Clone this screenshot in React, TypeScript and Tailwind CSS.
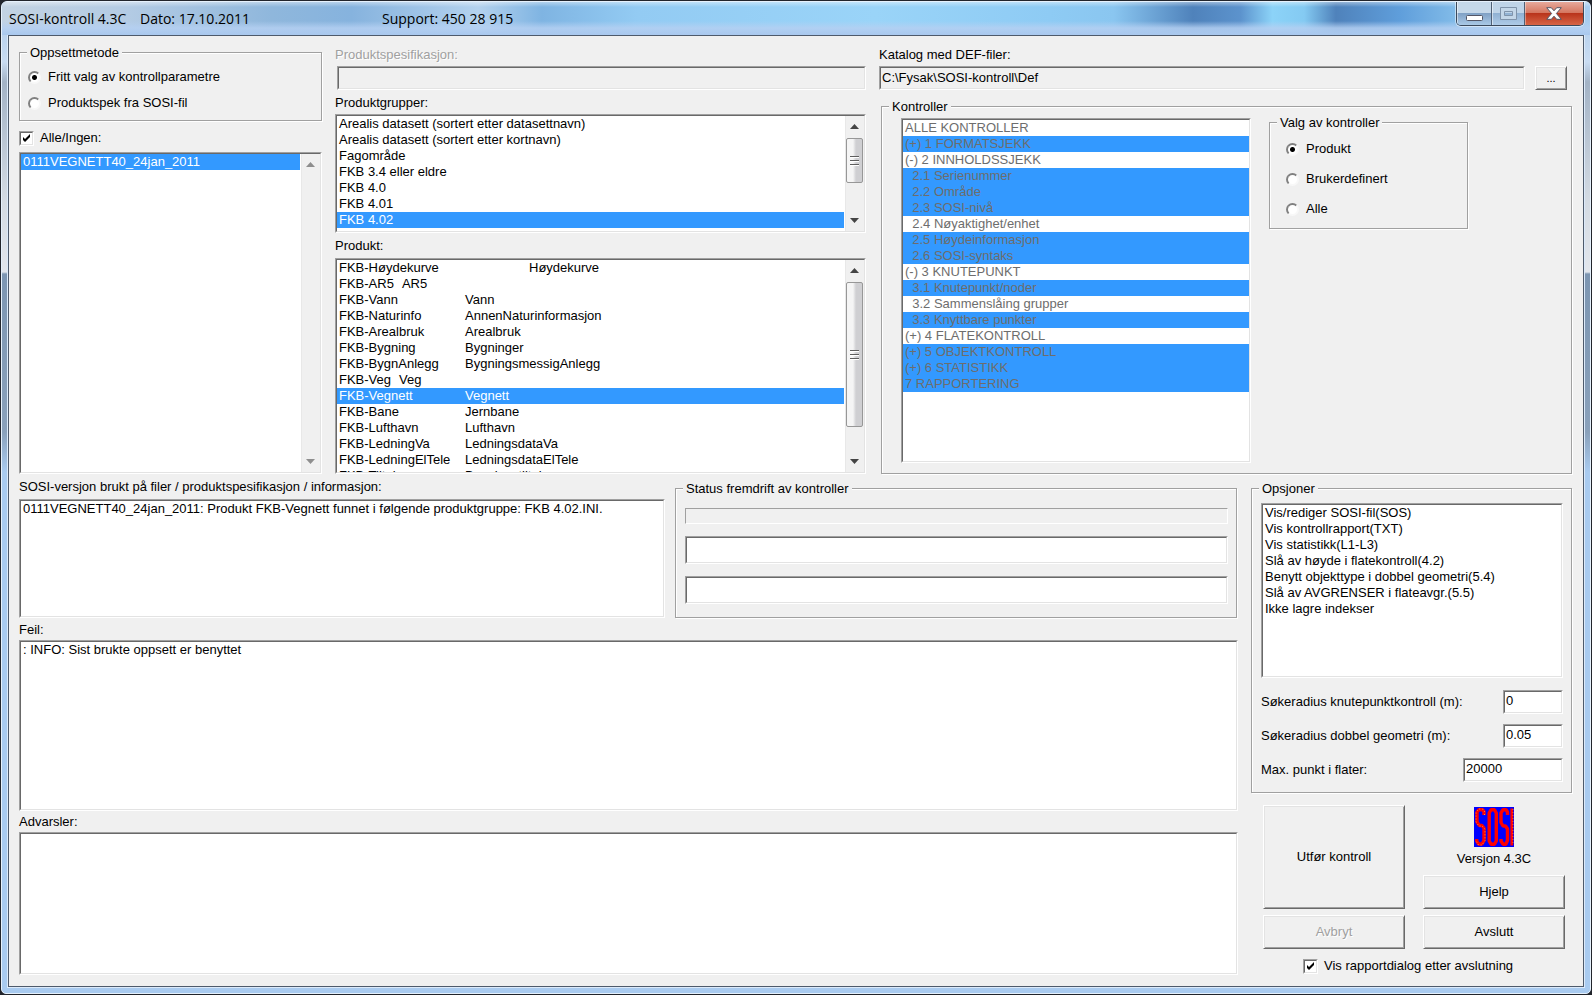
import type { ReactNode } from "react";

const sunken =
  "border border-t-[#a0a0a0] border-l-[#a0a0a0] border-r-white border-b-white";
const sunkenInner =
  "border border-t-[#696969] border-l-[#696969] border-r-[#e3e3e3] border-b-[#e3e3e3]";

function Sunken({ className = "", children }: { className?: string; children?: ReactNode }) {
  return (
    <div className={`${sunken} flex min-w-0 ${className}`}>
      <div className={`${sunkenInner} flex min-w-0 flex-1 overflow-hidden bg-white`}>{children}</div>
    </div>
  );
}

type Row = { text: string; second?: string; at?: "near" | "tab" | "far"; selected?: boolean };

const secondColumn = {
  near: "ml-2",
  tab: "absolute left-[128px]",
  far: "absolute left-[192px]",
};

function ListBox({
  label,
  rows,
  muted = false,
  className = "",
  scroll,
}: {
  label: string;
  rows: Row[];
  muted?: boolean;
  className?: string;
  scroll?: ReactNode;
}) {
  return (
    <Sunken className={className}>
      <ul role="listbox" aria-label={label} className="min-w-0 flex-1 overflow-hidden">
        {rows.map((row) => (
          <li
            key={row.text}
            role="option"
            aria-selected={!!row.selected}
            className={`relative h-4 pl-[2px] leading-4 whitespace-pre ${
              row.selected ? "bg-[#3399ff]" : ""
            } ${muted ? "text-[#6d6d6d]" : row.selected ? "text-white" : "text-black"}`}
          >
            {row.text}
            {row.second && <span className={secondColumn[row.at ?? "tab"]}>{row.second}</span>}
          </li>
        ))}
      </ul>
      {scroll}
    </Sunken>
  );
}

function Arrow({ up = false, dim = false }: { up?: boolean; dim?: boolean }) {
  return (
    <svg viewBox="0 0 9 5" className="h-[5px] w-[9px]" aria-hidden="true">
      <path d={up ? "M4.500 0L9 5H0Z" : "M4.500 5L9 0H0Z"} fill={dim ? "#8e8e8e" : "#444"} />
    </svg>
  );
}

function ScrollBar({ thumb, dim = false }: { thumb?: string; dim?: boolean }) {
  return (
    <div className="ml-[1px] flex w-[19px] shrink-0 flex-col border-l border-[#e8e8e8] bg-[#f0f0f0] pr-px">
      <button type="button" aria-label="Rull opp" disabled={dim} className="flex h-[22px] shrink-0 items-center justify-center pb-[2px]">
        <Arrow up dim={dim} />
      </button>
      <div className="min-h-0 flex-1">
        {thumb && (
          <div
            className={`flex items-center justify-center rounded-[2px] border border-[#979797] bg-linear-to-r from-[#f5f5f5] from-40% to-[#cfcfd2] to-60% ${thumb}`}
          >
            <svg viewBox="0 0 9 11" className="h-[11px] w-[9px]" aria-hidden="true">
              <path d="M0 1.5H9M0 5.5H9M0 9.5H9" stroke="#5e5e5e" />
              <path d="M0 2.5H9M0 6.5H9M0 10.5H9" stroke="#fff" />
            </svg>
          </div>
        )}
      </div>
      <button type="button" aria-label="Rull ned" disabled={dim} className="flex h-[22px] shrink-0 items-center justify-center">
        <Arrow dim={dim} />
      </button>
    </div>
  );
}

function Group({ title, className = "", children }: { title: string; className?: string; children: ReactNode }) {
  return (
    <fieldset className={`relative min-w-0 border border-[#a0a0a0] shadow-[1px_1px_0_#fff,inset_1px_1px_0_#fff] ${className}`}>
      <legend className="absolute -top-2 left-[7px] bg-[#f0f0f0] px-[3px] leading-4">{title}</legend>
      {children}
    </fieldset>
  );
}

function Radio({ name, label, checked = false }: { name: string; label: string; checked?: boolean }) {
  return (
    <label className="flex items-center gap-[7px] leading-4">
      <input
        type="radio"
        name={name}
        defaultChecked={checked}
        className="size-[13px] shrink-0 appearance-none rounded-full border-2 border-t-[#808080] border-r-[#f8f8f8] border-b-[#f8f8f8] border-l-[#808080] bg-white checked:bg-[radial-gradient(circle,#000_2px,#fff_3px)]"
      />
      {label}
    </label>
  );
}

function Check({ label }: { label: string }) {
  return (
    <label className="flex items-center gap-[6px] leading-4">
      <span className={`${sunken} grid size-[15px] shrink-0`}>
        <input
          type="checkbox"
          defaultChecked
          className={`${sunkenInner} peer col-start-1 row-start-1 size-[13px] appearance-none bg-white`}
        />
        <svg viewBox="0 0 13 13" className="pointer-events-none col-start-1 row-start-1 hidden size-[13px] peer-checked:block" aria-hidden="true">
          <path d="M3 5v3l2 2 5-5V2L5 7z" fill="#000" />
        </svg>
      </span>
      {label}
    </label>
  );
}

function PushButton({ children, className = "", disabled = false }: { children: ReactNode; className?: string; disabled?: boolean }) {
  return (
    <button
      type="button"
      disabled={disabled}
      className={`border border-t-white border-r-[#696969] border-b-[#696969] border-l-white bg-[#f0f0f0] leading-4 shadow-[inset_1px_1px_0_#e3e3e3,inset_-1px_-1px_0_#a0a0a0] disabled:text-[#a0a0a0] disabled:[text-shadow:1px_1px_0_#fff] ${className}`}
    >
      {children}
    </button>
  );
}

function NumberField({ id, label, value, width }: { id: string; label: string; value: string; width: string }) {
  return (
    <div className="flex h-6 items-center justify-between">
      <label htmlFor={id} className="leading-4">
        {label}
      </label>
      <Sunken className={`h-6 ${width}`}>
        <input id={id} defaultValue={value} className="w-full min-w-0 px-[1px] pb-[2px] leading-4" />
      </Sunken>
    </div>
  );
}

const groups: Row[] = [
  { text: "Arealis datasett (sortert etter datasettnavn)" },
  { text: "Arealis datasett (sortert etter kortnavn)" },
  { text: "Fagområde" },
  { text: "FKB 3.4 eller eldre" },
  { text: "FKB 4.0" },
  { text: "FKB 4.01" },
  { text: "FKB 4.02", selected: true },
  { text: "Kyst og Sjø fellesdel" },
];

const products: Row[] = [
  { text: "FKB-Høydekurve", second: "Høydekurve", at: "far" },
  { text: "FKB-AR5", second: "AR5", at: "near" },
  { text: "FKB-Vann", second: "Vann" },
  { text: "FKB-Naturinfo", second: "AnnenNaturinformasjon" },
  { text: "FKB-Arealbruk", second: "Arealbruk" },
  { text: "FKB-Bygning", second: "Bygninger" },
  { text: "FKB-BygnAnlegg", second: "BygningsmessigAnlegg" },
  { text: "FKB-Veg", second: "Veg", at: "near" },
  { text: "FKB-Vegnett", second: "Vegnett", selected: true },
  { text: "FKB-Bane", second: "Jernbane" },
  { text: "FKB-Lufthavn", second: "Lufthavn" },
  { text: "FKB-LedningVa", second: "LedningsdataVa" },
  { text: "FKB-LedningElTele", second: "LedningsdataElTele" },
  { text: "FKB-Tiltak", second: "Bygningstiltak" },
];

const controls: Row[] = [
  { text: "ALLE KONTROLLER" },
  { text: "(+) 1 FORMATSJEKK", selected: true },
  { text: "(-) 2 INNHOLDSSJEKK" },
  { text: "  2.1 Serienummer", selected: true },
  { text: "  2.2 Område", selected: true },
  { text: "  2.3 SOSI-nivå", selected: true },
  { text: "  2.4 Nøyaktighet/enhet" },
  { text: "  2.5 Høydeinformasjon", selected: true },
  { text: "  2.6 SOSI-syntaks", selected: true },
  { text: "(-) 3 KNUTEPUNKT" },
  { text: "  3.1 Knutepunkt/noder", selected: true },
  { text: "  3.2 Sammenslåing grupper" },
  { text: "  3.3 Knyttbare punkter", selected: true },
  { text: "(+) 4 FLATEKONTROLL" },
  { text: "(+) 5 OBJEKTKONTROLL", selected: true },
  { text: "(+) 6 STATISTIKK", selected: true },
  { text: "7 RAPPORTERING", selected: true },
];

const options: Row[] = [
  { text: "Vis/rediger SOSI-fil(SOS)" },
  { text: "Vis kontrollrapport(TXT)" },
  { text: "Vis statistikk(L1-L3)" },
  { text: "Slå av høyde i flatekontroll(4.2)" },
  { text: "Benytt objekttype i dobbel geometri(5.4)" },
  { text: "Slå av AVGRENSER i flateavgr.(5.5)" },
  { text: "Ikke lagre indekser" },
];

function Logo() {
  return (
    <svg viewBox="0 0 40 40" className="size-10" role="img" aria-label="SOSI">
      <rect width="40" height="40" fill="#0000ff" />
      <g fill="none" stroke="#ff0000" strokeWidth="3.400" strokeLinejoin="bevel">
        <path d="M10 8V4.500L8.500 2.700H5L3 5v10l2.500 3.500h2.500L10 21v12.500L8 37H4.500L2.700 34v-2" />
        <path d="M17 2.700h3.500L22.300 6v28l-1.800 3.200H17L15.200 34V6z" />
        <path d="M33.500 8V5L32 2.700h-3L27 6v9.500l2 3.500h2.500l2 3v11.500L31.800 37.200h-2.800L27 34v-2" />
        <path d="M37.800 1.500v37" strokeWidth="2.800" />
      </g>
      <g fill="none" stroke="#ffc040" strokeWidth="0.800" strokeDasharray="1 2">
        <path d="M10.500 8V4.500L8.500 2H5L2 5v10l3 4h3l3 3v11.500L8 38H4.500L2 34" />
      </g>
      <path d="M39 2v36" stroke="#ffc040" strokeWidth="0.600" strokeDasharray="1 2" />
    </svg>
  );
}

function TitleBar() {
  return (
    <header className="relative flex h-[33px] shrink-0 items-start overflow-hidden bg-[linear-gradient(90deg,#c3d3e3_0%,#b3cbe4_8%,#8fb7dc_17%,#86b3de_22%,#b4d2ee_30%,#7fb4e2_34%,#93cbf3_40%,#9ad4f8_55%,#8ecbf4_66%,#8ac6f0_70%,#4f82bb_75%,#5c93cd_78%,#8cd3f8_80%,#84caf2_82%,#4f82bb_84%,#5f9edb_88%,#86bfea_92%,#a8cdf0_100%)] font-['Open_Sans','Noto_Sans',sans-serif] text-sm text-black">
      <div className="pointer-events-none absolute inset-0 bg-[linear-gradient(180deg,#ffffff66_0,#ffffff00_5px,#ffffff00_19px,#b5d0f2d9_26px,#a9c8ee_33px)]" />
      <div className="relative flex flex-1 items-center pt-[7px] pl-[7px] leading-5">
        <h1 className="w-[373px] shrink-0">
          SOSI-kontroll 4.3C <span className="ml-[10px]">Dato: 17.10.2011</span>
        </h1>
        <span>Support: 450 28 915</span>
      </div>
      <div className="relative mr-[6px] flex h-6 w-32 overflow-hidden rounded-b-[5px] border border-t-0 border-[#3c4a5c] shadow-[0_0_0_1px_#ffffff80]">
        <button type="button" aria-label="Minimer" className="flex w-[35px] items-end justify-center border-r border-[#4f6076] bg-[linear-gradient(180deg,#c5d8e9_0_11px,#7fa0c4_11px,#a9c9e6)] pb-1 shadow-[inset_1px_0_0_#ffffff80]">
          <svg viewBox="0 0 17 6" className="h-[6px] w-[17px]" aria-hidden="true">
            <rect x="0.500" y="0.500" width="16" height="5" rx="1" fill="#fff" stroke="#535666" />
          </svg>
        </button>
        <button type="button" aria-label="Maksimer" disabled className="flex w-[33px] items-center justify-center border-r border-[#4f6076] bg-[linear-gradient(180deg,#bfd4e8_0_11px,#8fb0d2_11px,#aecbe8)] shadow-[inset_1px_0_0_#ffffff80]">
          <svg viewBox="0 0 17 13" className="h-[13px] w-[17px]" aria-hidden="true">
            <path d="M0.500 0.500h16v12H0.500zM4.500 4.500v4h8v-4z" fill="#c3d6e8" stroke="#7f93aa" fillRule="evenodd" />
          </svg>
        </button>
        <button type="button" aria-label="Lukk" className="flex flex-1 items-center justify-center bg-[linear-gradient(180deg,#e6a99b_0,#d4755f_11px,#b8321a_11px,#d9694a_24px)] shadow-[inset_1px_0_0_#ffffff60]">
          <svg viewBox="0 0 16 13" className="h-[13px] w-4" aria-hidden="true">
            <path d="M0.700 0.700h4.600L8 3.800l2.700-3.100h4.600L10.400 6.500l4.900 5.800h-4.600L8 9.200l-2.700 3.100H0.700l4.900-5.800z" fill="#fff" stroke="#535666" />
          </svg>
        </button>
      </div>
    </header>
  );
}

export default function App() {
  return (
    <div className="flex min-h-screen flex-col bg-[#22252c] p-px font-['Liberation_Sans',Arial,sans-serif] text-[13px] text-black">
      <div className="flex flex-1 flex-col overflow-hidden rounded-t-[6px] rounded-b-[5px] border border-[#e6f1fc] bg-[#a9c8ea] bg-[linear-gradient(180deg,#a9c8ea_0,#c9dcf2_60px,#a3b3c6_80px,#d4dbe3_200px,#e2e6ec_270px,#7d96b2_272px,#8aa1bb_430px,#a9cbf0_470px,#a9cbf0_100%)]">
        <TitleBar />
        <main className="mx-[6px] mb-[6px] flex flex-1 flex-col border border-[#4e5a6b] bg-[#f0f0f0] px-[10px] pt-[9px] pb-[11px] outline outline-[#dceafa]">
          <section className="grid h-[429px] grid-cols-[303fr_531fr_694fr] grid-rows-[minmax(0,1fr)] gap-[13px]">
            <div className="flex min-w-0 flex-col">
              <Group title="Oppsettmetode" className="mt-[7px] flex h-[69px] shrink-0 flex-col gap-[10px] pt-4 pl-2">
                <Radio name="setup" label="Fritt valg av kontrollparametre" checked />
                <Radio name="setup" label="Produktspek fra SOSI-fil" />
              </Group>
              <div className="mt-[9px] mb-[6px]">
                <Check label="Alle/Ingen:" />
              </div>
              <ListBox
                label="Alle/Ingen"
                className="min-h-0 flex-1"
                rows={[{ text: "0111VEGNETT40_24jan_2011", selected: true }]}
                scroll={<ScrollBar dim />}
              />
            </div>

            <div className="flex min-w-0 flex-col">
              <label htmlFor="spec" className="mt-[2px] leading-4 text-[#a0a0a0] [text-shadow:1px_1px_0_#fff]">
                Produktspesifikasjon:
              </label>
              <div className={`${sunken} mt-[3px] ml-[2px] flex h-6 shrink-0`}>
                <input id="spec" disabled className={`${sunkenInner} w-full bg-[#f0f0f0]`} />
              </div>
              <span className="mt-[5px] mb-[3px] leading-4">Produktgrupper:</span>
              <ListBox
                label="Produktgrupper"
                className="h-[119px] shrink-0"
                rows={groups}
                scroll={<ScrollBar thumb="h-[45px]" />}
              />
              <span className="mt-[5px] mb-1 leading-4">Produkt:</span>
              <ListBox label="Produkt" className="min-h-0 flex-1" rows={products} scroll={<ScrollBar thumb="h-[145px]" />} />
            </div>

            <div className="flex min-w-0 flex-col pr-px">
              <label htmlFor="catalog" className="mt-[2px] leading-4">
                Katalog med DEF-filer:
              </label>
              <div className="mt-[3px] mr-[5px] flex gap-[10px]">
                <div className={`${sunken} flex h-6 flex-1`}>
                  <input
                    id="catalog"
                    readOnly
                    defaultValue="C:\Fysak\SOSI-kontroll\Def"
                    className={`${sunkenInner} w-full bg-[#f0f0f0] px-[1px] pb-[1px] leading-4`}
                  />
                </div>
                <PushButton className="h-6 w-8 text-[11px]">...</PushButton>
              </div>
              <Group title="Kontroller" className="mt-4 ml-[2px] flex min-h-0 flex-1 items-start gap-[18px] pt-[11px] pb-[10px] pl-[19px]">
                <ListBox label="Kontroller" muted className="w-[350px] self-stretch" rows={controls} />
                <Group title="Valg av kontroller" className="mt-1 flex h-[107px] w-[199px] flex-col gap-[14px] pt-[18px] pl-4">
                  <Radio name="choice" label="Produkt" checked />
                  <Radio name="choice" label="Brukerdefinert" />
                  <Radio name="choice" label="Alle" />
                </Group>
              </Group>
            </div>
          </section>

          <section className="grid flex-1 grid-cols-[1219fr_322fr] gap-[13px]">
            <div className="flex min-w-0 flex-col">
              <div className="grid h-[144px] grid-cols-[646fr_562fr] gap-[10px] pr-px">
                <div className="flex min-w-0 flex-col">
                  <span className="mt-[5px] mb-1 leading-4">SOSI-versjon brukt på filer / produktspesifikasjon / informasjon:</span>
                  <ListBox
                    label="Informasjon"
                    className="flex-1"
                    rows={[
                      {
                        text: "0111VEGNETT40_24jan_2011: Produkt FKB-Vegnett funnet i følgende produktgruppe: FKB 4.02.INI.",
                      },
                    ]}
                  />
                </div>
                <Group title="Status fremdrift av kontroller" className="mt-[14px] flex flex-col gap-3 pt-[19px] pr-2 pl-[9px]">
                  <div role="progressbar" aria-label="Fremdrift" aria-valuenow={0} className="h-4 border border-t-[#a0a0a0] border-r-white border-b-white border-l-[#a0a0a0]" />
                  <Sunken className="h-7">
                    <input aria-label="Status 1" readOnly className="w-full" />
                  </Sunken>
                  <Sunken className="h-7">
                    <input aria-label="Status 2" readOnly className="w-full" />
                  </Sunken>
                </Group>
              </div>
              <span className="mt-1 mb-[2px] leading-4">Feil:</span>
              <ListBox label="Feil" className="h-[171px] shrink-0" rows={[{ text: ": INFO: Sist brukte oppsett er benyttet" }]} />
              <span className="mt-[3px] mb-[2px] leading-4">Advarsler:</span>
              <ListBox label="Advarsler" className="min-h-[139px] flex-1" rows={[]} />
            </div>

            <div className="flex min-w-0 flex-col">
              <Group title="Opsjoner" className="mt-[14px] mr-px flex h-[305px] flex-col gap-[10px] pt-[14px] pr-2 pl-[9px]">
                <ListBox label="Opsjoner" className="mb-[2px] h-[175px] shrink-0" rows={options} />
                <NumberField id="node-radius" label="Søkeradius knutepunktkontroll (m):" value="0" width="w-[60px]" />
                <NumberField id="double-radius" label="Søkeradius dobbel geometri (m):" value="0.05" width="w-[60px]" />
                <NumberField id="max-points" label="Max. punkt i flater:" value="20000" width="w-[100px]" />
              </Group>
              <div className="mt-3 grid grid-cols-2 gap-x-[18px] gap-y-[6px] pr-2 pl-3">
                <PushButton className="h-[104px]">Utfør kontroll</PushButton>
                <div className="flex flex-col items-center pt-[2px]">
                  <Logo />
                  <span className="mt-1 leading-4">Versjon 4.3C</span>
                  <PushButton className="mt-2 h-[34px] w-full">Hjelp</PushButton>
                </div>
                <PushButton disabled className="h-[34px]">
                  Avbryt
                </PushButton>
                <PushButton className="h-[34px]">Avslutt</PushButton>
              </div>
              <div className="mt-[9px] pl-[52px]">
                <Check label="Vis rapportdialog etter avslutning" />
              </div>
            </div>
          </section>
        </main>
      </div>
    </div>
  );
}
